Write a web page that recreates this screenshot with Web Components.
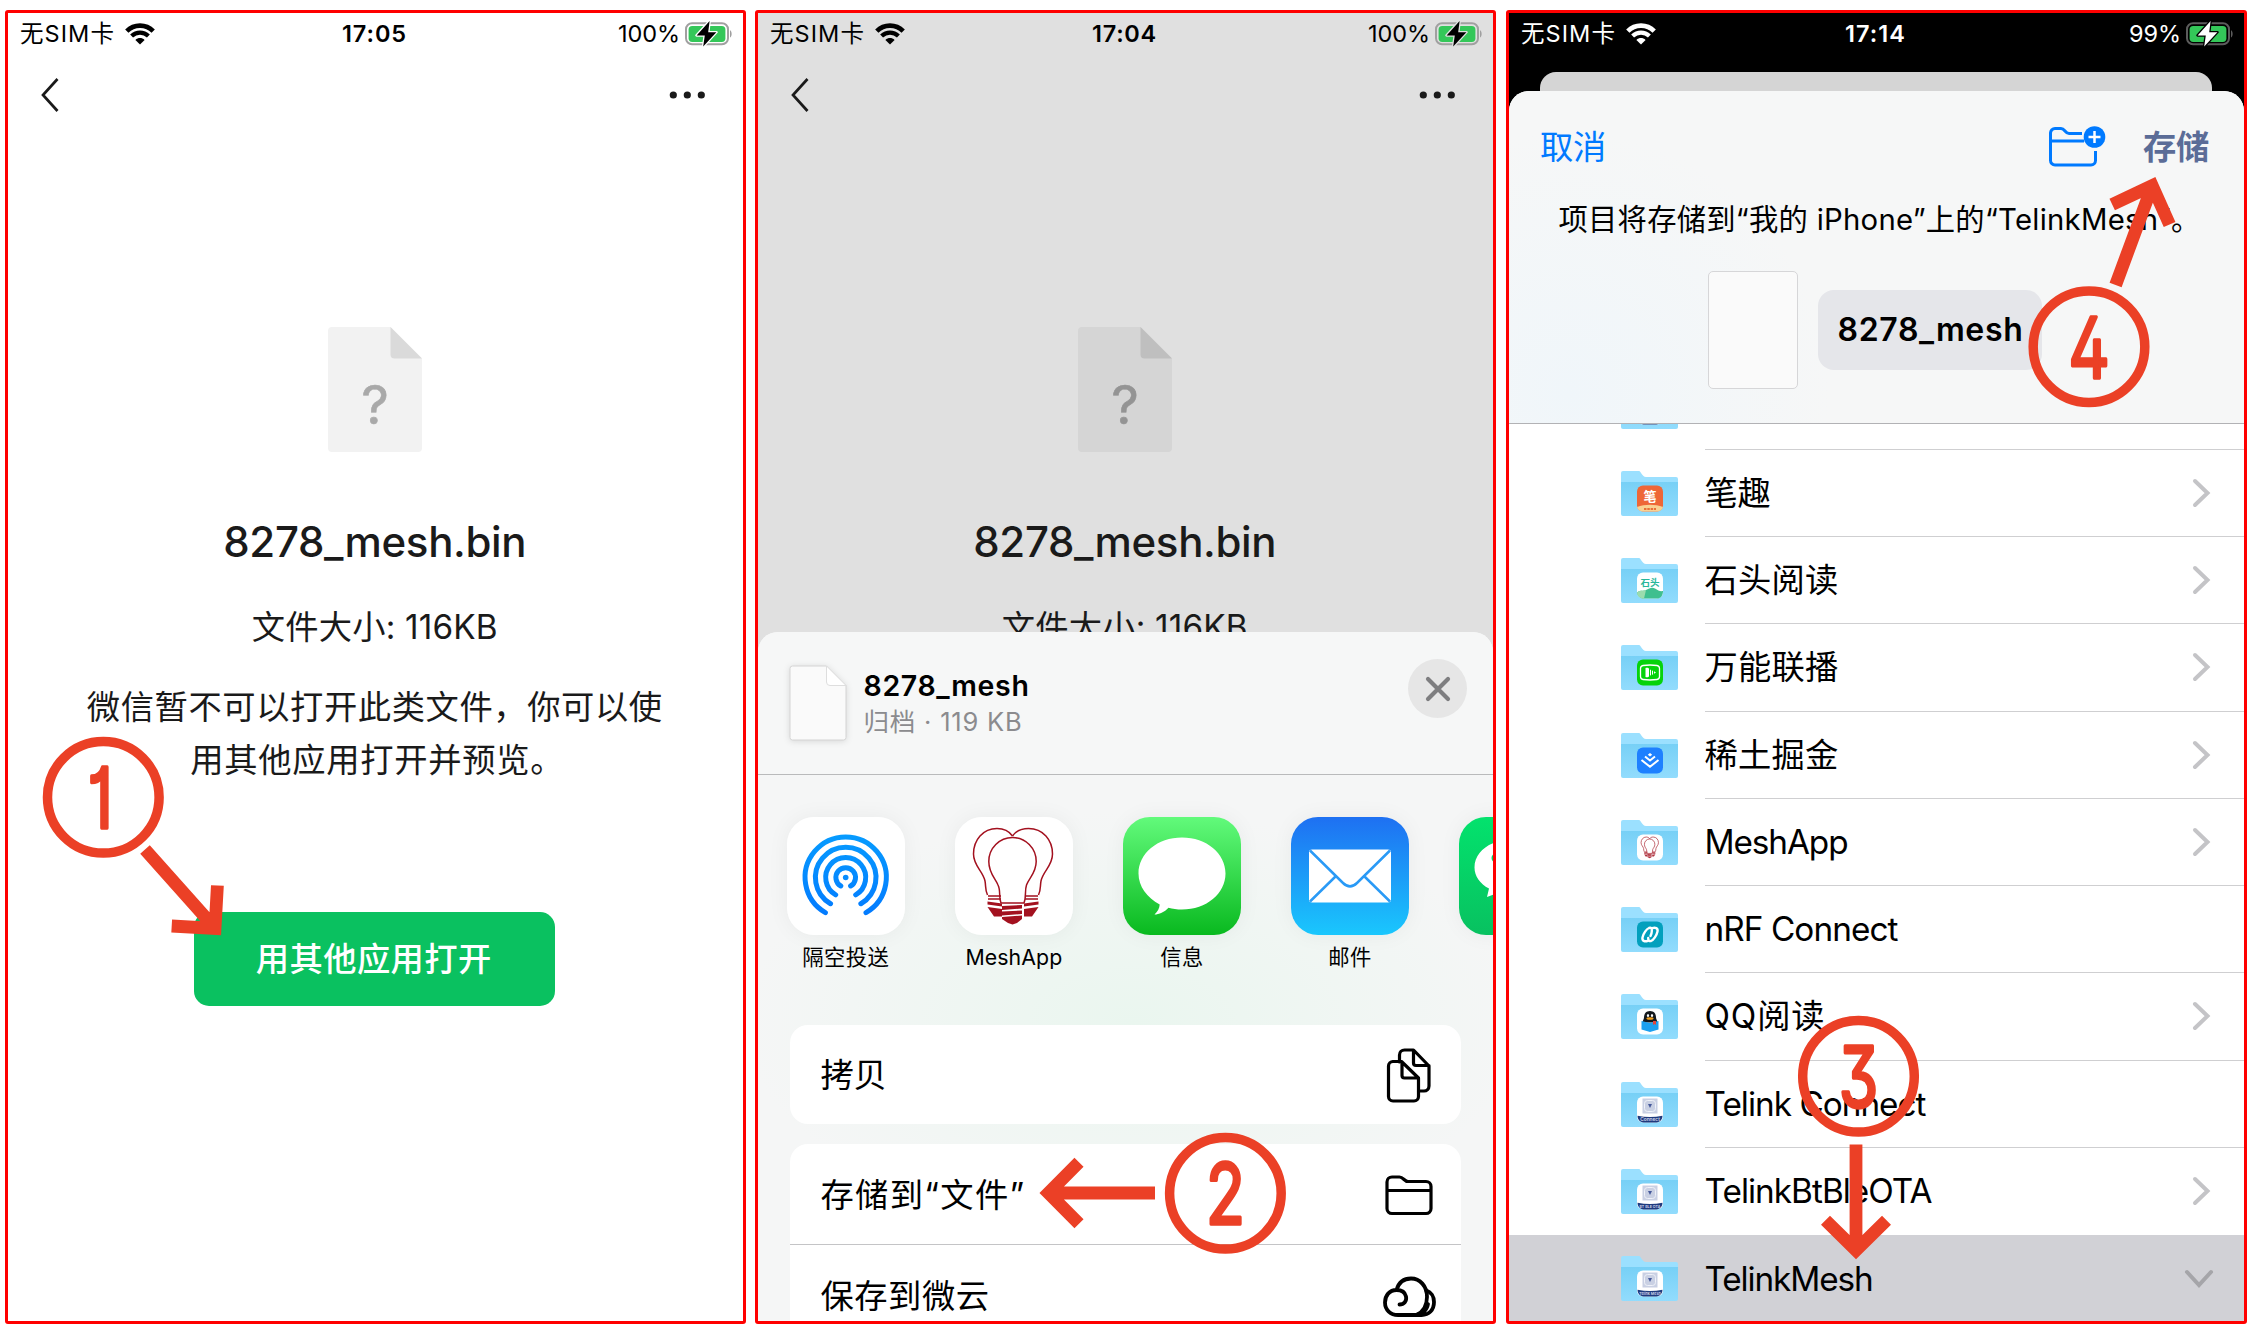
<!DOCTYPE html>
<html lang="zh-CN">
<head>
<meta charset="utf-8">
<title>8278_mesh.bin</title>
<style>
  html, body { margin: 0; background: #fff; }
  body { position: relative; width: 2250px; height: 1334px; overflow: hidden;
    font-family: Inter, "Noto Sans CJK SC", sans-serif; color: #000; }
  main { display: flex; padding: 10px 0 0 5px; }
  phone-frame + phone-frame { margin-left: 9px; }
  phone-frame.last { margin-left: 10px; }
</style>
</head>
<body>
<main>
  <phone-frame>
    <status-bar time="17:05" level="100%" level-w="62" time-w="65"></status-bar>
    <file-preview full></file-preview>
  </phone-frame>
  <phone-frame style="--bg:#e0e0e0;--page:#d5d5d5;--fold:#bfbfbf;--q:#949494;--halo:#e0e0e0">
    <status-bar time="17:04" level="100%" level-w="62" time-w="65"></status-bar>
    <file-preview></file-preview>
    <share-sheet></share-sheet>
  </phone-frame>
  <phone-frame class="last" style="--bg:#000;--halo:#000;--case:#5c5c5c">
    <status-bar style="color:#fff" time="17:14" level="99%" level-w="52" time-w="61"></status-bar>
    <save-sheet></save-sheet>
  </phone-frame>
</main>
<step-marks></step-marks>

<script>
const define = (name, html, after) => {
  const tpl = document.createElement('template');
  customElements.define(name, class extends HTMLElement {
    connectedCallback() {
      if (this.shadowRoot) return;
      if (typeof html === 'string') {
        tpl.innerHTML = html;
        this.attachShadow({ mode: 'open' }).append(tpl.content.cloneNode(true));
      } else {
        this.attachShadow({ mode: 'open' }).innerHTML = html(this);
      }
      if (after) after(this);
    }
  });
};

/* One line of text tracked so that it fills the width given in "w". */
define('fit-text', el => `
  <style>:host{display:block;flex:none;white-space:nowrap;width:${el.getAttribute('w')}px}span{display:inline-block}</style>
  <span>${el.getAttribute('text')}</span>`, el => {
  const s = el.shadowRoot.querySelector('span');
  const n = [...s.textContent].length;
  const d = (parseFloat(el.getAttribute('w')) - s.getBoundingClientRect().width) / n;
  s.style.letterSpacing = d.toFixed(3) + 'px';
});

define('phone-frame', `
  <style>
    :host{display:flex;flex-direction:column;flex:none;box-sizing:border-box;width:741px;height:1314px;
      border:3px solid #f00;border-radius:3px;background:var(--bg,#fff);overflow:hidden}
  </style><slot></slot>`);

define('status-bar', el => `
  <style>
    :host{display:grid;grid-template-columns:1fr auto 1fr;align-items:center;height:41px;flex:none;
      padding:0 10px 0 12px;font-size:23.5px;line-height:30px}
    .l,.r{display:flex;align-items:center}.r{justify-content:flex-end}
    .l svg{margin-left:10px}.r svg{margin-left:5px}.t{font-weight:600;margin:0 2px 0 -2px}
    svg{display:block;flex:none}
  </style>
  <div class="l"><fit-text w="95" text="无SIM卡"></fit-text>
    <svg width="30" height="22" viewBox="0 0 30 22" fill="none" stroke="currentColor">
      <path d="M1.8 8.2C9 .8 21 .8 28.2 8.2" stroke-width="4.6"/>
      <path d="M6.6 13C11.4 8.4 18.6 8.4 23.4 13" stroke-width="4.2"/>
      <path d="M15 21.6l-4.6-4.7c2.7-2.4 6.5-2.4 9.2 0z" fill="currentColor" stroke="none"/>
    </svg></div>
  <fit-text class="t" w="${el.getAttribute('time-w')}" text="${el.getAttribute('time')}"></fit-text>
  <div class="r"><fit-text w="${el.getAttribute('level-w')}" text="${el.getAttribute('level')}"></fit-text>
    <svg width="48" height="26" viewBox="0 0 48 26">
      <rect x="1" y="2.3" width="42" height="21" rx="6" fill="none" stroke="var(--case,#a0a0a0)" stroke-width="2"/>
      <path d="M45 9.2c2.2 1 2.2 6.2 0 7.2z" fill="var(--case,#a0a0a0)"/>
      <rect x="3.6" y="4.9" width="36.8" height="16" rx="3.6" fill="#34c759"/>
      <path d="M24.6 0L11.6 14.4h8.2L18.2 25.500 31.400 11.200h-8.200z" fill="currentColor" stroke="var(--halo,#fff)" stroke-width="2.6" stroke-linejoin="round" paint-order="stroke"/>
    </svg></div>`);

define('file-preview', el => `
  <style>
    :host{display:flex;flex-direction:column;align-items:center;color:#1a1a1a;font-size:33.3px;
      box-sizing:border-box;height:${el.hasAttribute('full') ? 1267 : 578}px;flex:none;overflow:hidden;padding-right:1.500px}
    nav{display:flex;justify-content:space-between;align-items:center;align-self:stretch;height:82px;flex:none;padding:0 36px 0 32px}
    .icon{margin-top:191px;flex:none;display:block}
    .icon text{font:400 54px Inter,sans-serif}
    .name{font-size:42px;font-weight:500;line-height:60px;margin-top:60px}
    .size{line-height:50px;margin-top:30px}
    .note{display:flex;flex-direction:column;align-items:center;line-height:52.5px;margin-top:29px;flex:none}
    .note .b{padding-left:5px}
    button{margin:126px 0 0;width:361px;height:94px;border:0;border-radius:15px;background:#0ac160;color:#fff;
      font:500 33.3px/50px Inter,"Noto Sans CJK SC",sans-serif;display:flex;align-items:center;justify-content:center;padding:0 2px 0 0;box-sizing:border-box;flex:none}
  </style>
  <nav>
    <svg width="20" height="36" viewBox="0 0 20 36" fill="none" stroke="#1a1a1a" stroke-width="2.7"><path d="M17.500 2L3 18l14.500 16"/></svg>
    <svg width="37" height="10" viewBox="0 0 37 10" fill="#1a1a1a"><circle cx="4.300" cy="5" r="3.600"/><circle cx="18.300" cy="5" r="3.600"/><circle cx="32.300" cy="5" r="3.600"/></svg>
  </nav>
  <svg class="icon" width="94" height="125" viewBox="0 0 94 125">
    <path d="M4 0h58.500L94 31.500V121a4 4 0 0 1-4 4H4a4 4 0 0 1-4-4V4a4 4 0 0 1 4-4z" fill="var(--page,#f2f2f2)"/>
    <path d="M62.500 0L94 31.500H66.500a4 4 0 0 1-4-4z" fill="var(--fold,#dadada)"/>
    <text x="47" y="96.500" text-anchor="middle" fill="var(--q,#a9a9a9)" stroke="var(--q,#a9a9a9)" stroke-width=".6">?</text>
  </svg>
  <fit-text class="name" w="303" text="8278_mesh.bin"></fit-text>
  <fit-text class="size" w="246" text="文件大小: 116KB"></fit-text>
  ${el.hasAttribute('full') ? `
  <div class="note"><fit-text w="576" text="微信暂不可以打开此类文件，你可以使"></fit-text>
  <fit-text class="b" w="374" text="用其他应用打开并预览。"></fit-text></div>
  <button><fit-text w="236" text="用其他应用打开"></fit-text></button>` : ''}`);

const bulbs = (w = 1.5) => `
  <g fill="none" stroke="#a3111f" stroke-width="${w}">
    <path d="M57.500 19C54 14 48 11.500 42 11.500 28 11.500 18.500 23 18.500 37c0 12 9.500 17 11.500 27 1 5 0 9 2.500 14"/>
    <path d="M57.500 19C61 14 67 11.500 73.500 11.500 88 11.500 97.500 23 97.500 37c0 12-9.500 17-11.500 27-1 5 0 9-2.500 14"/>
    <path d="M46 86c-2.500-6 0-12-3-18C40 61 33.800 56 33.800 44.500a23.700 24 0 0 1 47.400 0C81.200 56 74 61 71.500 68c-2 6 0 12-2.500 18z"/>
    <path d="M33 79h13M33 82h13M70 79h13M70 82h13"/>
  </g>
  <g fill="#a3111f">
    <path d="M32.500 84.500l14.500 2v3l-14.500-2zM32.500 90l14.500 2v7.500h-8zM83.500 84.500l-14.500 2v3l14.500-2zM83.500 90l-14.500 2v7.500h8z"/>
    <path d="M47 89l20-1v3.500l-20 1.500zM47 94.500l20-1v3.500l-20 1.500zM47 100l20-1.500v3.500l-5 4-4.500 1.500-4.500-1.500-6-4z"/>
  </g>`;

const arc = r => {
  const x = r * Math.sin(Math.PI / 6), y = r * Math.cos(Math.PI / 6);
  return `<path d="M${58.700 - x} ${60.500 + y}A${r} ${r} 0 1 1 ${58.700 + x} ${60.500 + y}"/>`;
};
const art = {
  airdrop: `<rect width="118" height="118" fill="#fff"/>
    <linearGradient id="a" gradientUnits="userSpaceOnUse" x1="0" y1="18" x2="0" y2="98"><stop stop-color="#069bff"/><stop offset="1" stop-color="#037bff"/></linearGradient>
    <g fill="none" stroke="url(#a)" stroke-width="5" stroke-linecap="round">${[40.600, 30.300, 20, 9.800].map(arc).join('')}</g>
    <circle cx="58.700" cy="60.500" r="2.800" fill="#058cff"/>`,
  mesh: `<rect width="118" height="118" fill="#fff"/>${bulbs()}`,
  sms: `<linearGradient id="a" x2="0" y2="1"><stop stop-color="#62fa7b"/><stop offset="1" stop-color="#09b91f"/></linearGradient>
    <rect width="118" height="118" fill="url(#a)"/>
    <path d="M59 20.500c24.500 0 43.500 16 43.500 36S83.500 92.500 59 92.500c-5 0-9.500-.6-13.500-1.800C41.500 95 36 97.500 31.500 97.500c3-2.800 5-6 5.200-10C24 80.500 15.500 69.500 15.500 56.500 15.500 36.500 34.500 20.500 59 20.500z" fill="#fff"/>`,
  mail: `<linearGradient id="a" x2="0" y2="1"><stop stop-color="#1e70f2"/><stop offset="1" stop-color="#1ac7fd"/></linearGradient>
    <rect width="118" height="118" fill="url(#a)"/>
    <rect x="18" y="32.500" width="82" height="53" rx="3" fill="#fff"/>
    <path d="M19 33.500l33 32.500c4.500 4.300 9.500 4.300 14 0l33-32.500M19 84.500l26-25.500M99 84.500L73 59" fill="none" stroke="#2a9af6" stroke-width="2.500"/>`,
  wechat: `<linearGradient id="a" x2="0" y2="1"><stop stop-color="#03e26d"/><stop offset="1" stop-color="#08c160"/></linearGradient>
    <rect width="118" height="118" fill="url(#a)"/>
    <path d="M49 23.500c19 0 34 12 34 27s-15 27-34 27c-4 0-7-.5-10-1.500l-11 4 2-8.500C21 67 15.500 59 15.500 50.500c0-15 14.500-27 33.500-27z" fill="#fff"/>
    <circle cx="37" cy="41" r="4.500" fill="#04d268"/>`
};

define('app-tile', el => `
  <style>
    :host{display:flex;flex-direction:column;align-items:center;flex:none;width:117.600px;font-size:21.300px;line-height:30px}
    div{width:117.600px;height:117.600px;border-radius:27px;overflow:hidden;box-shadow:0 0 22px rgba(0,40,20,.05)}
    svg{display:block}fit-text{margin-top:7.500px}
  </style>
  <div><svg width="118" height="118" viewBox="0 0 118 118">${art[el.getAttribute('art')]}</svg></div>
  ${el.hasAttribute('text') ? `<fit-text w="${el.getAttribute('w')}" text="${el.getAttribute('text')}"></fit-text>` : ''}`);

const rowIcons = {
  copy: `<path d="M16.500 16V9a5 5 0 0 1 5-5h9L46 20v20a5 5 0 0 1-5 5h-5.500M30.500 4v13a2.500 2.500 0 0 0 2.500 2.500H46"/>
    <path d="M9.500 15.500h9L35.500 32v18.500a4.500 4.500 0 0 1-4.500 4.500H10A4.500 4.500 0 0 1 5.500 50.500V20A4.500 4.500 0 0 1 10 15.500zM19 16v13.500a2.500 2.500 0 0 0 2.500 2.500H35"/>`,
  folder: `<path d="M4 16a5 5 0 0 1 5-5h7.500c4 0 4.500 4.500 8.500 4.500H43a5 5 0 0 1 5 5V42.500a5 5 0 0 1-5 5H9a5 5 0 0 1-5-5zM4 24.500h44"/>`,
  cloud: `<g stroke-width="3.800"><path d="M16.500 37.500c4.500 0 7.500-3.500 6.500-8C22 25 18 23 13.500 23 6.500 23 2 28.500 2 35.500 2 43 7.500 48 15 48h18.500c6.500-3 10.500-10 10.500-18 0-11-7-18.500-16-18.500-7.500 0-12.500 4.500-14.500 11.500"/>
    <path d="M43.500 23.500c4.500 1.500 7.500 6 7.500 11.500C51 43 46 48 38.500 48H33c6 0 11-5 12-11"/></g>`
};
define('action-row', el => `
  <style>
    :host{display:flex;align-items:center;justify-content:space-between;box-sizing:border-box;padding:1px 24.500px 0 31px;height:101.300px;font-size:33.300px;line-height:50px}
    svg{display:block;flex:none}
  </style>
  <fit-text w="${el.getAttribute('w')}" text="${el.getAttribute('text')}"></fit-text>
  <svg width="54" height="58" viewBox="0 0 54 58" fill="none" stroke="#000" stroke-width="3.200" stroke-linejoin="round" stroke-linecap="round">${rowIcons[el.getAttribute('icon')]}</svg>`);

define('share-sheet', `
  <style>
    :host{display:flex;flex-direction:column;flex:1;min-height:0;border-radius:20px 20px 0 0;overflow:hidden;
      background:radial-gradient(ellipse 390px 210px at 375px 390px,#eaf6ef,#f5f6f6 100%)}
    header{display:flex;align-items:center;box-sizing:border-box;height:143px;padding:0 26px 0 32px;border-bottom:1px solid #b9babb;flex:none;
      background:#f6f7f7}
    .doc{filter:drop-shadow(0 1px 3px rgba(0,0,0,.12));flex:none;margin-left:-1px}
    .info{flex:1;margin-left:16.500px;line-height:36px;padding-top:1px}
    .n{font-size:28.500px;font-weight:600}.s{font-size:25.500px;color:#8b8b8e}
    .x{align-self:flex-start;margin-top:27px;width:59px;height:59px;border-radius:50%;background:#e6e6e6;display:flex;align-items:center;justify-content:center}
    .apps{display:flex;gap:50.500px;padding:42px 0 0 29px;height:208px;flex:none;overflow:hidden}
    .card{margin:0 32px 20.300px 31.500px;border-radius:18px;background:#fff;flex:none}
    .one{height:98.700px;display:flex}.one>*{flex:1;height:98.700px}
    .line{border-bottom:1px solid #c4c4c6}
  </style>
  <header>
    <svg class="doc" width="58" height="76" viewBox="0 0 58 76"><path d="M3.500 1h34L57 20.500v52a2.500 2.500 0 0 1-2.500 2.500h-51A2.500 2.500 0 0 1 1 72.500v-69A2.500 2.500 0 0 1 3.500 1z" fill="#fafafa" stroke="#d4d4d4"/><path d="M37.500 1v16a3.500 3.500 0 0 0 3.500 3.500h16z" fill="#fff" stroke="#dedede"/></svg>
    <div class="info"><fit-text class="n" w="166" text="8278_mesh"></fit-text><fit-text class="s" w="159" text="归档 · 119 KB"></fit-text></div>
    <div class="x"><svg width="28" height="28" viewBox="0 0 28 28" stroke="#7e7e80" stroke-width="4.200" stroke-linecap="round"><path d="M4 4l20 20M24 4L4 24"/></svg></div>
  </header>
  <div class="apps">
    <app-tile art="airdrop" w="87" text="隔空投送"></app-tile>
    <app-tile art="mesh" w="97" text="MeshApp"></app-tile>
    <app-tile art="sms" w="43.500" text="信息"></app-tile>
    <app-tile art="mail" w="43.500" text="邮件"></app-tile>
    <app-tile art="wechat"></app-tile>
  </div>
  <div class="card one"><action-row w="66" text="拷贝" icon="copy"></action-row></div>
  <div class="card">
    <action-row class="line" w="205" text="存储到“文件”" icon="folder"></action-row>
    <action-row w="169" text="保存到微云" icon="cloud"></action-row>
  </div>`);

const telink = label => `<rect width="26" height="26" rx="6" fill="#fff"/>
  <rect x="5.500" y="2" width="15" height="15" fill="#c9d0e3"/><rect x="7.500" y="4" width="11" height="11" rx="3" fill="none" stroke="#eef1f8"/>
  <path d="M11 7.500h4L13 11.500z" fill="#46599b"/>
  <path d="M.5 19.300c8 1.600 17 1.600 25 0-.2 4-2.500 6.200-6 6.700h-13c-3.500-.5-5.800-2.700-6-6.700z" fill="#1f3a7d"/>
  <text x="13" y="24.200" text-anchor="middle" font-size="${label.length > 8 ? 3.700 : 4.800}" font-weight="600" fill="#d5dcee" font-family="Inter,sans-serif">${label}</text>`;
const badges = {
  telink0: telink(''),
  pen: `<rect width="26" height="26" rx="6" fill="#ee6637"/><path d="M0 21.500c8-3 18-3 26 0-.8 3-3 4.500-6 4.500H6c-3 0-5.200-1.500-6-4.500z" fill="#f9d193"/><path d="M7 23.500h12" stroke="#e8703a" stroke-width="2" stroke-dasharray="2.500 .8"/>
    <text x="13" y="15.500" text-anchor="middle" font-size="13" font-weight="700" fill="#fff" font-family="'Noto Sans CJK SC',sans-serif">笔</text>`,
  stone: `<rect width="26" height="26" rx="6" fill="#fff"/><path d="M0 20c4-3 6-1 9-2.500s6-3.500 9-1.500 5 3 8 2.500c0 5-2.500 7.500-6 7.500H7c-3.500 0-6.500-2-7-6z" fill="#3fbf8f"/><path d="M0 20c4-3 7-1 9-2.500L7 26c-3.500 0-6.500-2-7-6z" fill="#9bdcae"/>
    <text x="13" y="13.500" text-anchor="middle" font-size="9.500" font-weight="700" fill="#28b79a" font-family="'Noto Sans CJK SC',sans-serif">石头</text>`,
  cast: `<rect width="26" height="26" rx="6" fill="#06d30b"/><g fill="none" stroke="#fff" stroke-width="1.300"><path d="M6 6c5-.7 9-.7 14 0 2 .3 2.500 1 2.500 3v8c0 2-.5 2.700-2.500 3-5 .7-9 .7-14 0-2-.3-2.500-1-2.500-3V9c0-2 .5-2.700 2.500-3z"/></g><path d="M8.500 8.500c2-.5 3 0 3.500.8v7.400c-.5.800-1.500 1.300-3.500.8zM13 10l1 .6v5l-1 .6zM15 10.800l1 .6v3.400l-1 .6zM17 11.700l2 1.300-2 1.300z" fill="#fff"/>`,
  juejin: `<rect width="26" height="26" rx="6" fill="#1e80ff"/><path d="M13 5.500l2.200 1.800L13 9l-2.200-1.700z" fill="#fff"/><path d="M8 9l5 4 5-4M4.500 12.500L13 19.300l8.500-6.800" fill="none" stroke="#fff" stroke-width="2"/>`,
  mesh: `<rect width="26" height="26" rx="6" fill="#fff"/><g transform="scale(.22)" opacity=".85">${bulbs(3.400)}</g>`,
  nrf: `<rect width="26" height="26" rx="6" fill="#03a0bd"/><g fill="none" stroke="#fff" stroke-width="2.400" stroke-linecap="round" stroke-linejoin="round"><path d="M10.800 19.300c-3 1.200-6 .2-5.300-3.300.8-4 4-8.500 6.500-9.500 2.300-.8 3 .5 2.800 3 0 1.500-.6 3.500-1.300 5"/><path d="M15.200 6.700c3-1.200 6-.2 5.300 3.300-.8 4-4 8.500-6.500 9.500-1.800.6-2.800-.5-2.800-3"/></g>`,
  qq: `<rect width="26" height="26" rx="6" fill="#fff"/><path d="M13 2.500c4 0 6 2.800 6 6.500 0 2 1.500 3 1.500 5h-15c0-2 1.500-3 1.500-5 0-3.700 2-6.500 6-6.500z" fill="#14181d"/><ellipse cx="11" cy="7" rx="1.100" ry="1.500" fill="#fff"/><ellipse cx="15" cy="7" rx="1.100" ry="1.500" fill="#fff"/><ellipse cx="13" cy="10" rx="3.600" ry="1.300" fill="#f6a21d"/><path d="M4.500 12.500l8.500 2 8.500-2v8.500L13 23.500l-8.500-2.500z" fill="#1ca0f0"/><path d="M16 12.500v4l1.500-1 1.500 1v-4z" fill="#e2453c"/>`,
  telink1: telink('Connect'), telink2: telink('BT BLE OTA'), telink3: telink('Telink Mesh')
};
define('folder-row', el => `
  <style>
    :host{display:flex;align-items:center;height:87.250px;flex:none;padding-left:112px;font-size:33.300px;line-height:50px;background:${el.hasAttribute('selected') ? '#d1d1d6' : 'transparent'}}
    svg{display:block;flex:none}
    div{display:flex;flex:1;align-items:center;justify-content:space-between;box-sizing:border-box;height:87.250px;margin-left:26.500px;
      padding-right:${el.hasAttribute('selected') ? 30 : 33}px;border-bottom:${el.hasAttribute('selected') ? 0 : 1}px solid ${el.hasAttribute('plain') ? 'transparent' : '#cfcfd1'}}
  </style>
  <svg width="57" height="45" viewBox="0 0 57 45">
    <linearGradient id="f" x2="0" y2="1"><stop stop-color="#77d0f6"/><stop offset="1" stop-color="#92dcfd"/></linearGradient>
    <path d="M2 0h16c2 0 3 6 7 6h30a2 2 0 0 1 2 2v10H0V2a2 2 0 0 1 2-2z" fill="#9be0ff"/>
    <path d="M0 11h57v32a2 2 0 0 1-2 2H2a2 2 0 0 1-2-2z" fill="url(#f)"/>
    <g transform="translate(16 14.500)">${badges[el.getAttribute('badge')]}</g>
  </svg>
  <div><fit-text w="${el.getAttribute('w')}" text="${el.getAttribute('text')}"></fit-text>
  ${el.hasAttribute('leaf') ? '' : el.hasAttribute('selected')
    ? '<svg width="30" height="20" viewBox="0 0 30 20" fill="none" stroke="#a5a5a9" stroke-width="4" stroke-linecap="round"><path d="M3 3l12 13L27 3"/></svg>'
    : '<svg width="20" height="30" viewBox="0 0 20 30" fill="none" stroke="#c4c4c7" stroke-width="4" stroke-linecap="round"><path d="M4 3l12.500 12L4 27"/></svg>'}
  </div>`);

define('save-sheet', `
  <style>
    :host{display:flex;flex-direction:column;flex:1;min-height:0;padding-top:18px}
    .behind{height:19px;margin:0 32px 0 31px;border-radius:16px 16px 0 0;background:#d5d5d5;flex:none}
    .sheet{display:flex;flex-direction:column;flex:1;min-height:0;border-radius:20px 20px 0 0;background:#fff;overflow:hidden}
    header{box-sizing:border-box;height:333px;flex:none;border-bottom:1px solid #b2b2b5;
      background:radial-gradient(ellipse 260px 260px at 60px 300px,#f0f6fa,#f6f7f7 100%)}
    .bar{display:flex;align-items:center;height:107px;padding:2px 35px 0 31px;font-size:33.300px;line-height:50px;color:#007aff}
    .bar svg{margin-left:auto;margin-right:37.500px;margin-top:-2px}
    .save{font-weight:700;color:#5b6c97}
    .msg{font-size:29.300px;line-height:40px;padding-left:49.500px}
    .file{display:flex;align-items:center;gap:20px;padding:30.500px 0 0 199px}
    .thumb{box-sizing:border-box;width:90px;height:118px;border:1.500px solid #d6d6d8;border-radius:5px;background:#fafafa}
    .field{box-sizing:border-box;width:224px;height:80px;border-radius:16px;background:#e5e6ea;padding:15px 0 0 19.500px;font-size:32px;font-weight:600;line-height:50px}
    .clip{flex:1;min-height:0;overflow:hidden}
    .list{display:flex;flex-direction:column;margin-top:-61.500px}
  </style>
  <div class="behind"></div>
  <div class="sheet">
    <header>
      <div class="bar"><fit-text w="66" text="取消"></fit-text>
        <svg width="58" height="42" viewBox="0 0 58 42" fill="none" stroke="#007aff" stroke-width="3">
          <path d="M34 8.500H21c-4 0-4-5-8-5H7A4.500 4.500 0 0 0 2.500 8v27.500A4.500 4.500 0 0 0 7 40h36a4.500 4.500 0 0 0 4.500-4.500V26M2.500 16H36"/>
          <circle cx="46.500" cy="12" r="10.800" fill="#007aff" stroke="none"/><path d="M40.500 12h12M46.500 6v12" stroke="#fff" stroke-width="2.500"/>
        </svg>
        <fit-text class="save" w="66" text="存储"></fit-text></div>
      <fit-text class="msg" w="642" text="项目将存储到“我的 iPhone”上的“TelinkMesh”。"></fit-text>
      <div class="file"><div class="thumb"></div><div class="field"><fit-text w="186" text="8278_mesh"></fit-text></div></div>
    </header>
    <div class="clip"><div class="list">
      <folder-row badge="telink0" w="0" text="" leaf></folder-row>
      <folder-row badge="pen" w="66" text="笔趣"></folder-row>
      <folder-row badge="stone" w="134" text="石头阅读"></folder-row>
      <folder-row badge="cast" w="134" text="万能联播"></folder-row>
      <folder-row badge="juejin" w="134" text="稀土掘金"></folder-row>
      <folder-row badge="mesh" w="143" text="MeshApp"></folder-row>
      <folder-row badge="nrf" w="193" text="nRF Connect" leaf></folder-row>
      <folder-row badge="qq" w="121" text="QQ阅读"></folder-row>
      <folder-row badge="telink1" w="221" text="Telink Connect" leaf></folder-row>
      <folder-row badge="telink2" w="227" text="TelinkBtBleOTA" plain></folder-row>
      <folder-row badge="telink3" w="168" text="TelinkMesh" selected></folder-row>
    </div></div>
  </div>`);

/* Numbered callouts that lie over the three phones. */
const mark = (n, x, y, dx = 0) => `<circle cx="${x}" cy="${y}" r="55.800"/>
  <text transform="translate(${x + dx} ${y + 31}) scale(.76 1)" text-anchor="middle">${n}</text>`;
define('step-marks', `
  <style>
    :host{position:absolute;left:0;top:0;width:2250px;height:1334px;pointer-events:none}
    svg{display:block;fill:none;stroke:#eb4026;stroke-width:9.500}
    text{font:400 84px Inter,sans-serif;font-feature-settings:"cv01" 1,"cv02" 1,"cv09" 1,"ss01" 1;fill:#eb4026;stroke-width:3.400;stroke-linejoin:round}
    .a{stroke-width:12.800}
  </style>
  <svg width="2250" height="1334" viewBox="0 0 2250 1334">
    ${mark(1, 103.300, 797.300, -3)}${mark(2, 1225.400, 1193.300)}${mark(3, 1858.500, 1076.300)}${mark(4, 2089, 346.700)}
    <g class="a">
      <path d="M145 849.500L215 928M217.400 885.500L215 928.500 171.700 926"/>
      <path d="M1155 1193H1049M1079 1162.300L1048.500 1193l30.500 30.700"/>
      <path d="M1856 1144.500V1250M1825.500 1220.300L1856 1250.300l30.500-30"/>
      <path d="M2115.600 285L2152.200 186M2112.200 204.500L2152.200 185.600 2169.600 224.500"/>
    </g>
  </svg>`);
</script>
</body>
</html>
